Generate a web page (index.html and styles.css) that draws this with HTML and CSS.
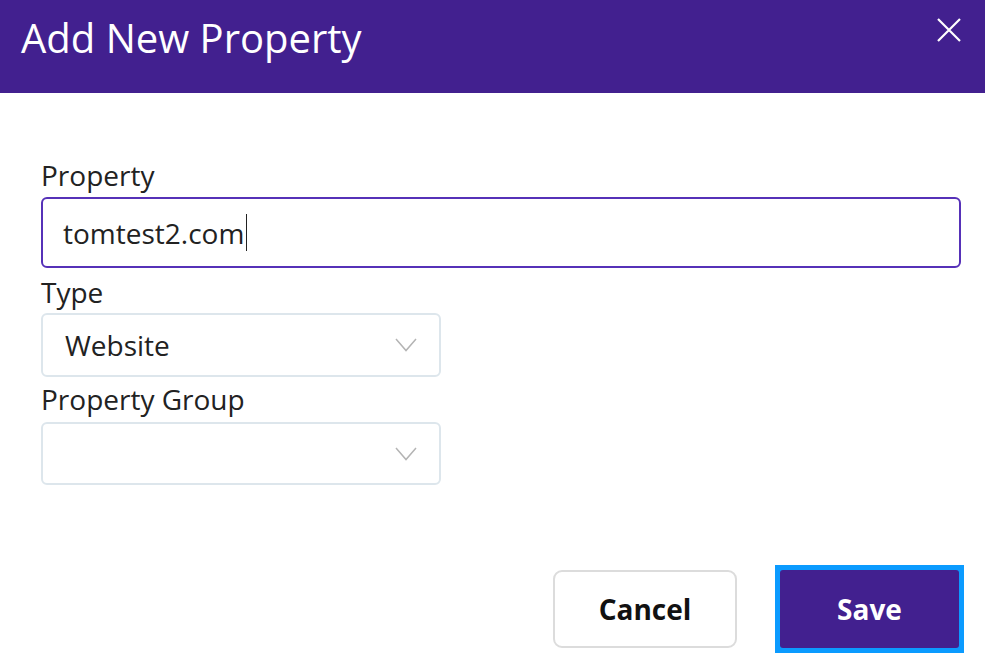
FILE: index.html
```html
<!DOCTYPE html>
<html>
<head>
<meta charset="utf-8">
<link rel="stylesheet" href="styles.css">
</head>
<body>
<div class="dialog">
  <header class="header">
    <h1 class="title">Add New Property</h1>
    <button class="close" aria-label="Close">
      <svg width="24" height="24" viewBox="0 0 24 24"><path d="M1 1L23 23M23 1L1 23" stroke="#fff" stroke-width="2.2" fill="none"/></svg>
    </button>
  </header>
  <main class="body">
    <div class="field field-property">
      <label class="label">Property</label>
      <div class="input"><span class="value">tomtest2.com</span><span class="caret"></span></div>
    </div>
    <div class="field field-type">
      <label class="label">Type</label>
      <div class="select"><span class="value">Website</span>
        <svg class="chev" width="22" height="14" viewBox="0 0 22 14"><path d="M1 1L11 12.5L21 1" stroke="#b4b4b4" stroke-width="1.5" fill="none"/></svg>
      </div>
    </div>
    <div class="field field-group">
      <label class="label">Property Group</label>
      <div class="select select-empty"><span class="value"></span>
        <svg class="chev" width="22" height="14" viewBox="0 0 22 14"><path d="M1 1L11 12.5L21 1" stroke="#b4b4b4" stroke-width="1.5" fill="none"/></svg>
      </div>
    </div>
  </main>
  <footer class="footer">
    <button class="btn btn-cancel">Cancel</button>
    <span class="focus-ring"><button class="btn btn-save">Save</button></span>
  </footer>
</div>
</body>
</html>
```
FILE: styles.css
```css
html, body {
  margin: 0;
  padding: 0;
  background: #fff;
  font-family: "Open Sans", "Noto Sans", sans-serif;
}
.dialog {
  width: 985px;
  height: 672px;
  display: flex;
  flex-direction: column;
}
.header {
  flex: 0 0 93px;
  height: 93px;
  box-sizing: border-box;
  background: #42208f;
  display: flex;
  justify-content: space-between;
  align-items: flex-start;
  padding: 13px 24px 0 21px;
}
.title {
  margin: 0;
  font-size: 40px;
  font-weight: 400;
  line-height: 49px;
  color: #fff;
}
.close {
  margin-top: 5px;
  width: 24px;
  height: 24px;
  padding: 0;
  border: 0;
  background: none;
  display: block;
}
.close svg { display: block; }
.body {
  padding: 65px 24px 0 41px;
  box-sizing: border-box;
  flex: 0 0 auto;
}
.field {
  display: flex;
  flex-direction: column;
}
.label {
  font-size: 28px;
  line-height: 35px;
  color: #222;
}
.input {
  margin-top: 4px;
  height: 71px;
  box-sizing: border-box;
  width: 920px;
  border: 2px solid #5631b8;
  border-radius: 6px;
  display: flex;
  align-items: center;
  padding-left: 20px;
  font-size: 28px;
  color: #222;
}
.caret {
  display: inline-block;
  width: 1px;
  height: 37px;
  background: #222;
  margin-left: 2px;
}
.field-type { margin-top: 7px; }
.field-group { margin-top: 5px; }
.select {
  margin-top: 3px;
  width: 400px;
  height: 64px;
  box-sizing: border-box;
  border: 2px solid #dde6ec;
  border-radius: 6px;
  display: flex;
  align-items: center;
  justify-content: space-between;
  padding: 0 22px 0 22px;
  font-size: 28px;
  color: #222;
}
.field-group .select { margin-top: 5px; height: 63px; }
.chev { display: block; }
.footer {
  display: flex;
  justify-content: flex-end;
  align-items: center;
  gap: 38px;
  padding: 0 21px 0 0;
  margin-top: 80px;
  flex: 0 0 auto;
}
.btn {
  font-family: "Open Sans", "Noto Sans", sans-serif;
  font-size: 28px;
  font-weight: 700;
  height: 78px;
  box-sizing: border-box;
  padding: 0;
  cursor: pointer;
}
.btn-cancel {
  width: 184px;
  background: #fff;
  color: #111;
  border: 2px solid #dcdcdc;
  border-radius: 9px;
}
.focus-ring {
  display: flex;
  padding: 5px;
  background: #0b9bff;
}
.btn-save {
  width: 179px;
  background: #42208f;
  color: #fff;
  border: 0;
  border-radius: 3px;
}
```
